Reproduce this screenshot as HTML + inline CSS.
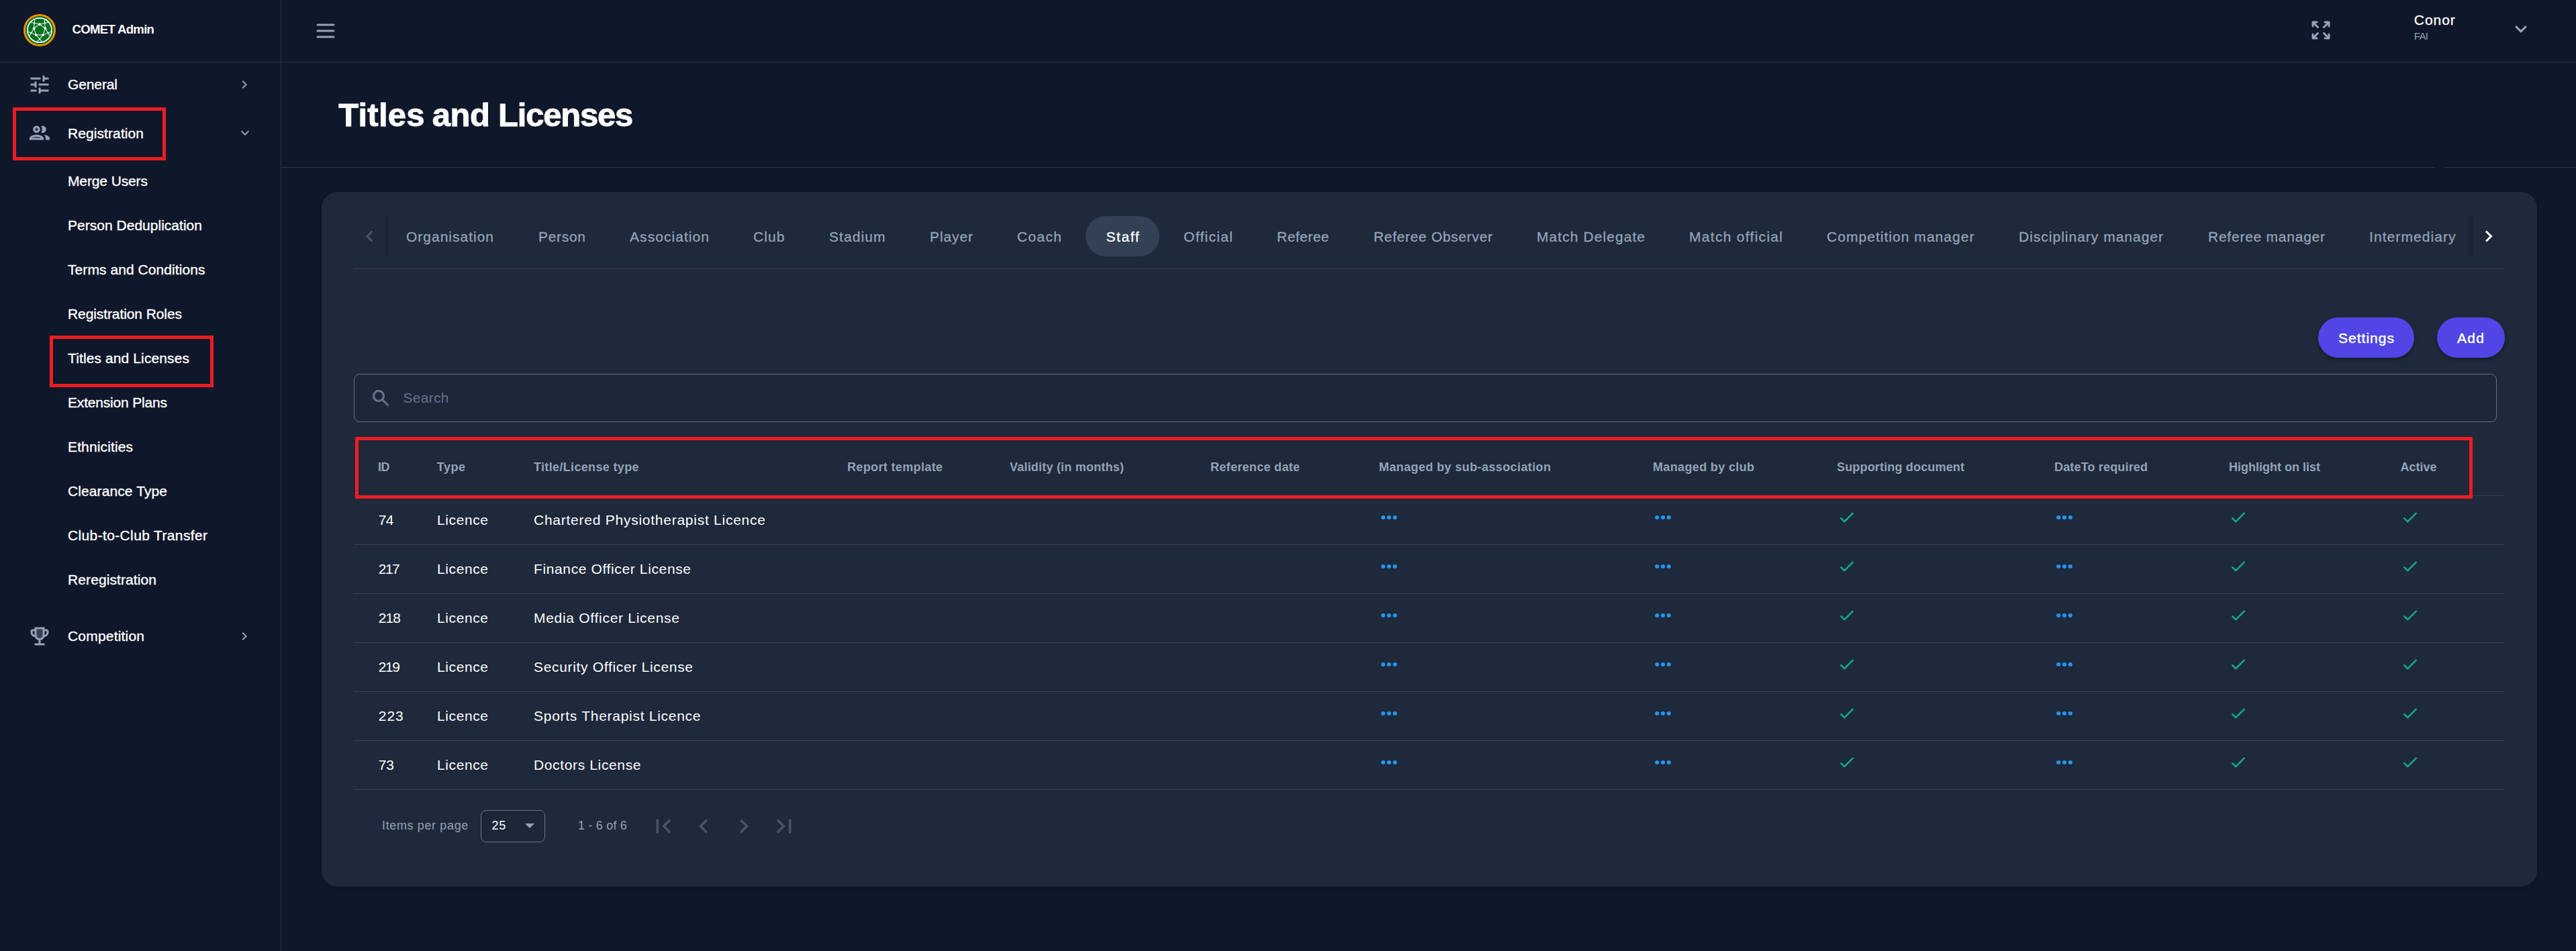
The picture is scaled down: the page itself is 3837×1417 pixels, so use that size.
<!DOCTYPE html>
<html lang="en"><head><meta charset="utf-8"><title>Titles and Licenses - COMET Admin</title>
<style>
html,body{margin:0;padding:0;background:#0f172a;}
body{width:3837px;height:1417px;position:relative;overflow:hidden;font-family:"Liberation Sans",sans-serif;}
.abs{position:absolute;display:block}
.t{position:absolute;white-space:pre;line-height:1;font-family:"Liberation Sans",sans-serif;}
</style></head><body>
<div class="abs" style="left:418px;top:0;width:1px;height:1417px;background:#2a3243"></div>
<div class="abs" style="left:0;top:92px;width:3837px;height:1px;background:#2a3243"></div>
<div class="abs" style="left:419px;top:249px;width:3208px;height:1px;background:#2a3243"></div>
<div class="abs" style="left:3640px;top:249px;width:197px;height:1px;background:#2a3243"></div>
<div class="abs" style="left:479px;top:286px;width:3300px;height:1035px;border-radius:24px;background:#1e293b;box-shadow:0 2px 4px rgba(0,0,0,.25)"></div>
<svg class="abs" style="left:35px;top:21px" width="48" height="48" viewBox="0 0 48 48"><circle cx="24" cy="24" r="24" fill="#f79400"/><circle cx="24" cy="24" r="21.2" fill="#0a7021"/><circle cx="24" cy="24" r="18.1" fill="none" stroke="#fff" stroke-width="1.7"/><line x1="24.00" y1="15.20" x2="32.37" y2="21.28" stroke="#fff" stroke-width="1.05" stroke-opacity=".92"/><line x1="32.37" y1="21.28" x2="29.17" y2="31.12" stroke="#fff" stroke-width="1.05" stroke-opacity=".92"/><line x1="29.17" y1="31.12" x2="18.83" y2="31.12" stroke="#fff" stroke-width="1.05" stroke-opacity=".92"/><line x1="18.83" y1="31.12" x2="15.63" y2="21.28" stroke="#fff" stroke-width="1.05" stroke-opacity=".92"/><line x1="15.63" y1="21.28" x2="24.00" y2="15.20" stroke="#fff" stroke-width="1.05" stroke-opacity=".92"/><line x1="29.17" y1="31.12" x2="20.18" y2="41.69" stroke="#fff" stroke-width="1.05" stroke-opacity=".92"/><line x1="18.83" y1="31.12" x2="27.82" y2="41.69" stroke="#fff" stroke-width="1.05" stroke-opacity=".92"/><line x1="18.83" y1="31.12" x2="5.99" y2="25.83" stroke="#fff" stroke-width="1.05" stroke-opacity=".92"/><line x1="15.63" y1="21.28" x2="8.35" y2="33.10" stroke="#fff" stroke-width="1.05" stroke-opacity=".92"/><line x1="15.63" y1="21.28" x2="16.69" y2="7.44" stroke="#fff" stroke-width="1.05" stroke-opacity=".92"/><line x1="24.00" y1="15.20" x2="10.51" y2="11.93" stroke="#fff" stroke-width="1.05" stroke-opacity=".92"/><line x1="24.00" y1="15.20" x2="37.49" y2="11.93" stroke="#fff" stroke-width="1.05" stroke-opacity=".92"/><line x1="32.37" y1="21.28" x2="31.31" y2="7.44" stroke="#fff" stroke-width="1.05" stroke-opacity=".92"/><line x1="32.37" y1="21.28" x2="39.65" y2="33.10" stroke="#fff" stroke-width="1.05" stroke-opacity=".92"/><line x1="29.17" y1="31.12" x2="42.01" y2="25.83" stroke="#fff" stroke-width="1.05" stroke-opacity=".92"/><circle cx="24.00" cy="15.20" r="1.900" fill="#fff"/><circle cx="32.37" cy="21.28" r="1.900" fill="#fff"/><circle cx="29.17" cy="31.12" r="1.900" fill="#fff"/><circle cx="18.83" cy="31.12" r="1.900" fill="#fff"/><circle cx="15.63" cy="21.28" r="1.900" fill="#fff"/><circle cx="24.00" cy="37.20" r="1.150" fill="#fff"/><circle cx="11.45" cy="28.08" r="1.150" fill="#fff"/><circle cx="16.24" cy="13.32" r="1.150" fill="#fff"/><circle cx="31.76" cy="13.32" r="1.150" fill="#fff"/><circle cx="36.55" cy="28.08" r="1.150" fill="#fff"/></svg>
<div class="t " style="left:107.50px;top:35.46px;font-size:18.6px;color:#fff;letter-spacing:-0.700px;font-weight:700;">COMET Admin</div>
<svg class="abs" style="left:466.5px;top:27.5px" width="36" height="36" viewBox="0 0 24 24" ><path d="M4 6h16M4 12h16M4 18h16" stroke="#94a3b8" stroke-width="2" stroke-linecap="round" fill="none"/></svg>
<svg class="abs" style="left:3438.5px;top:27px" width="36" height="36" viewBox="0 0 24 24" ><path d="M4 8V4m0 0h4M4 4l5 5m11-1V4m0 0h-4m4 0l-5 5M4 16v4m0 0h4m-4 0l5-5m11 5l-5-5m5 5v-4m0 4h-4" stroke="#94a3b8" stroke-width="2" stroke-linecap="round" stroke-linejoin="round" fill="none"/></svg>
<svg class="abs" style="left:3737px;top:25px" width="36" height="36" viewBox="0 0 24 24" ><path d="M16.59 8.59L12 13.17 7.41 8.59 6 10l6 6 6-6z" fill="#94a3b8"/></svg>
<div class="t " style="left:3595.80px;top:18.52px;font-size:21px;color:#fff;letter-spacing:0.950px;-webkit-text-stroke:0.35px #fff;">Conor</div>
<div class="t " style="left:3595.80px;top:45.80px;font-size:15px;color:#94a3b8;letter-spacing:-0.654px;">FAI</div>
<svg class="abs" style="left:41px;top:107.5px" width="36" height="36" viewBox="0 0 24 24" ><path d="M3 17v2h6v-2H3zM3 5v2h10V5H3zm10 16v-2h8v-2h-8v-2h-2v6h2zM7 9v2H3v2h4v2h2V9H7zm14 4v-2H11v2h10zm-6-4h2V7h4V5h-4V3h-2v6z" fill="#94a3b8"/></svg>
<svg class="abs" style="left:41px;top:179.5px" width="36" height="36" viewBox="0 0 24 24" ><circle cx="9" cy="8.5" opacity=".3" r="1.5" fill="#94a3b8"/><path d="M4.34 17h9.32c-.84-.58-2.87-1.25-4.66-1.25s-3.82.67-4.66 1.25z" opacity=".3" fill="#94a3b8"/><path fill="#94a3b8" d="M9 12c1.93 0 3.5-1.57 3.5-3.5S10.93 5 9 5 5.5 6.57 5.5 8.5 7.07 12 9 12zm0-5c.83 0 1.5.67 1.5 1.5S9.83 10 9 10s-1.5-.67-1.5-1.5S8.17 7 9 7zm0 6.750c-2.340 0-7 1.170-7 3.500V19h14v-1.750c0-2.330-4.660-3.500-7-3.500zM4.340 17c.84-.58 2.870-1.250 4.660-1.250s3.820.67 4.660 1.250H4.340zm11.700-3.190c1.160.84 1.960 1.960 1.960 3.440V19h4v-1.750c0-2.020-3.500-3.170-5.960-3.440zM15 12c1.930 0 3.500-1.570 3.500-3.500S16.930 5 15 5c-.54 0-1.040.13-1.500.35.630.89 1 1.980 1 3.150s-.37 2.260-1 3.150c.46.220.96.350 1.500.350z"/></svg>
<svg class="abs" style="left:41px;top:929.5px" width="36" height="36" viewBox="0 0 24 24" ><path d="M12 14c-1.650 0-3-1.350-3-3V5h6v6c0 1.650-1.350 3-3 3z" opacity=".3" fill="#94a3b8"/><path fill="#94a3b8" d="M19 5h-2V3H7v2H5c-1.100 0-2 .9-2 2v1c0 2.550 1.920 4.630 4.390 4.940.63 1.500 1.980 2.630 3.610 2.960V19H7v2h10v-2h-4v-3.100c1.630-.33 2.980-1.460 3.610-2.960C19.080 12.630 21 10.550 21 8V7c0-1.100-.9-2-2-2zM5 8V7h2v3.820C5.840 10.400 5 9.300 5 8zm7 6c-1.650 0-3-1.350-3-3V5h6v6c0 1.650-1.350 3-3 3zm7-6c0 1.300-.84 2.400-2 2.820V7h2v1z"/></svg>
<svg class="abs" style="left:352px;top:113.5px" width="24" height="24" viewBox="0 0 24 24" ><path d="M10 6L8.59 7.41 13.17 12l-4.58 4.59L10 18l6-6z" fill="#94a3b8"/></svg>
<svg class="abs" style="left:353px;top:185.5px" width="24" height="24" viewBox="0 0 24 24" ><path d="M16.59 8.59L12 13.17 7.41 8.59 6 10l6 6 6-6z" fill="#94a3b8"/></svg>
<svg class="abs" style="left:352px;top:936px" width="24" height="24" viewBox="0 0 24 24" ><path d="M10 6L8.59 7.41 13.17 12l-4.58 4.59L10 18l6-6z" fill="#94a3b8"/></svg>
<div class="t " style="left:101.00px;top:115.22px;font-size:21px;color:#fff;letter-spacing:-0.119px;-webkit-text-stroke:0.35px #fff;">General</div>
<div class="t " style="left:101.00px;top:187.72px;font-size:21px;color:#fff;letter-spacing:0.086px;-webkit-text-stroke:0.35px #fff;">Registration</div>
<div class="t " style="left:101.00px;top:259.22px;font-size:21px;color:#fff;letter-spacing:-0.120px;-webkit-text-stroke:0.35px #fff;">Merge Users</div>
<div class="t " style="left:101.00px;top:325.22px;font-size:21px;color:#fff;letter-spacing:0.019px;-webkit-text-stroke:0.35px #fff;">Person Deduplication</div>
<div class="t " style="left:101.00px;top:391.22px;font-size:21px;color:#fff;letter-spacing:0.073px;-webkit-text-stroke:0.35px #fff;">Terms and Conditions</div>
<div class="t " style="left:101.00px;top:457.22px;font-size:21px;color:#fff;letter-spacing:-0.093px;-webkit-text-stroke:0.35px #fff;">Registration Roles</div>
<div class="t " style="left:101.00px;top:523.22px;font-size:21px;color:#fff;letter-spacing:0.112px;-webkit-text-stroke:0.35px #fff;">Titles and Licenses</div>
<div class="t " style="left:101.00px;top:589.22px;font-size:21px;color:#fff;letter-spacing:-0.185px;-webkit-text-stroke:0.35px #fff;">Extension Plans</div>
<div class="t " style="left:101.00px;top:655.22px;font-size:21px;color:#fff;letter-spacing:0.129px;-webkit-text-stroke:0.35px #fff;">Ethnicities</div>
<div class="t " style="left:101.00px;top:721.22px;font-size:21px;color:#fff;letter-spacing:0.099px;-webkit-text-stroke:0.35px #fff;">Clearance Type</div>
<div class="t " style="left:101.00px;top:787.22px;font-size:21px;color:#fff;letter-spacing:0.363px;-webkit-text-stroke:0.35px #fff;">Club-to-Club Transfer</div>
<div class="t " style="left:101.00px;top:853.22px;font-size:21px;color:#fff;letter-spacing:0.098px;-webkit-text-stroke:0.35px #fff;">Reregistration</div>
<div class="t " style="left:101.00px;top:937.22px;font-size:21px;color:#fff;letter-spacing:0.194px;-webkit-text-stroke:0.35px #fff;">Competition</div>
<div class="t " style="left:504.25px;top:147.02px;font-size:49px;color:#fff;letter-spacing:0.230px;font-weight:700;-webkit-text-stroke:0.9px #fff;">Titles</div>
<div class="t " style="left:643.75px;top:147.02px;font-size:49px;color:#fff;letter-spacing:-0.433px;font-weight:700;-webkit-text-stroke:0.9px #fff;">and</div>
<div class="t " style="left:742.00px;top:147.02px;font-size:49px;color:#fff;letter-spacing:-1.206px;font-weight:700;-webkit-text-stroke:0.9px #fff;">Licenses</div>
<div class="abs" style="left:527px;top:400px;width:3203.5px;height:1px;background:#374152"></div>
<div class="abs" style="left:1617px;top:322px;width:110px;height:60px;border-radius:30px;background:#334155"></div>
<div class="t " style="left:605.00px;top:342.22px;font-size:21px;color:#94a3b8;letter-spacing:0.993px;-webkit-text-stroke:0.3px #94a3b8;">Organisation</div>
<div class="t " style="left:802.00px;top:342.22px;font-size:21px;color:#94a3b8;letter-spacing:0.692px;-webkit-text-stroke:0.3px #94a3b8;">Person</div>
<div class="t " style="left:938.00px;top:342.22px;font-size:21px;color:#94a3b8;letter-spacing:1.061px;-webkit-text-stroke:0.3px #94a3b8;">Association</div>
<div class="t " style="left:1122.00px;top:342.22px;font-size:21px;color:#94a3b8;letter-spacing:1.103px;-webkit-text-stroke:0.3px #94a3b8;">Club</div>
<div class="t " style="left:1235.00px;top:342.22px;font-size:21px;color:#94a3b8;letter-spacing:1.077px;-webkit-text-stroke:0.3px #94a3b8;">Stadium</div>
<div class="t " style="left:1385.00px;top:342.22px;font-size:21px;color:#94a3b8;letter-spacing:0.895px;-webkit-text-stroke:0.3px #94a3b8;">Player</div>
<div class="t " style="left:1515.00px;top:342.22px;font-size:21px;color:#94a3b8;letter-spacing:1.324px;-webkit-text-stroke:0.3px #94a3b8;">Coach</div>
<div class="t " style="left:1647.50px;top:342.22px;font-size:21px;color:#fff;letter-spacing:1.547px;-webkit-text-stroke:0.3px #fff;">Staff</div>
<div class="t " style="left:1763.00px;top:342.22px;font-size:21px;color:#94a3b8;letter-spacing:1.314px;-webkit-text-stroke:0.3px #94a3b8;">Official</div>
<div class="t " style="left:1902.00px;top:342.22px;font-size:21px;color:#94a3b8;letter-spacing:0.465px;-webkit-text-stroke:0.3px #94a3b8;">Referee</div>
<div class="t " style="left:2046.00px;top:342.22px;font-size:21px;color:#94a3b8;letter-spacing:0.673px;-webkit-text-stroke:0.3px #94a3b8;">Referee Observer</div>
<div class="t " style="left:2289.00px;top:342.22px;font-size:21px;color:#94a3b8;letter-spacing:1.070px;-webkit-text-stroke:0.3px #94a3b8;">Match Delegate</div>
<div class="t " style="left:2516.00px;top:342.22px;font-size:21px;color:#94a3b8;letter-spacing:1.295px;-webkit-text-stroke:0.3px #94a3b8;">Match official</div>
<div class="t " style="left:2721.00px;top:342.22px;font-size:21px;color:#94a3b8;letter-spacing:1.040px;-webkit-text-stroke:0.3px #94a3b8;">Competition manager</div>
<div class="t " style="left:3007.00px;top:342.22px;font-size:21px;color:#94a3b8;letter-spacing:0.996px;-webkit-text-stroke:0.3px #94a3b8;">Disciplinary manager</div>
<div class="t " style="left:3289.00px;top:342.22px;font-size:21px;color:#94a3b8;letter-spacing:0.755px;-webkit-text-stroke:0.3px #94a3b8;">Referee manager</div>
<div class="t " style="left:3529.00px;top:342.22px;font-size:21px;color:#94a3b8;letter-spacing:1.071px;-webkit-text-stroke:0.3px #94a3b8;">Intermediary</div>
<svg class="abs" style="left:540px;top:338px" width="22" height="28" viewBox="0 0 22 28"><path d="M14.5 6.5L7 14l7.500 7.500" stroke="#475569" stroke-width="3" fill="none"/></svg>
<svg class="abs" style="left:3696px;top:338px" width="22" height="28" viewBox="0 0 22 28"><path d="M7 6.5L14.500 14 7 21.500" stroke="#fff" stroke-width="3" fill="none"/></svg>
<div class="abs" style="left:574px;top:322px;width:10px;height:60px;background:linear-gradient(90deg,rgba(15,23,42,.3),rgba(15,23,42,0))"></div>
<div class="abs" style="left:3673px;top:322px;width:10px;height:60px;background:linear-gradient(270deg,rgba(15,23,42,.38),rgba(15,23,42,0))"></div>
<div class="abs" style="left:3452.5px;top:473px;width:143px;height:60px;border-radius:30px;background:#4f46e5;box-shadow:0 3px 6px rgba(0,0,0,.3)"></div>
<div class="abs" style="left:3629.5px;top:473px;width:101px;height:60px;border-radius:30px;background:#4f46e5;box-shadow:0 3px 6px rgba(0,0,0,.3)"></div>
<div class="t " style="left:3483.00px;top:493.47px;font-size:21px;color:#fff;letter-spacing:1.017px;-webkit-text-stroke:0.45px #fff;">Settings</div>
<div class="t " style="left:3660.00px;top:493.47px;font-size:21px;color:#fff;letter-spacing:1.317px;-webkit-text-stroke:0.45px #fff;">Add</div>
<div class="abs" style="left:526.5px;top:556.5px;width:3192.0px;height:72px;border-radius:9px;border:1px solid #64748b;background:#1c273a;box-sizing:border-box"></div>
<svg class="abs" style="left:552px;top:578px" width="30" height="30" viewBox="0 0 20 20" ><path fill-rule="evenodd" clip-rule="evenodd" d="M8 4a4 4 0 100 8 4 4 0 000-8zM2 8a6 6 0 1110.89 3.476l4.817 4.817a1 1 0 01-1.414 1.414l-4.816-4.816A6 6 0 012 8z" fill="#64748b"/></svg>
<div class="t " style="left:600.50px;top:582.22px;font-size:21px;color:#64748b;letter-spacing:0.292px;">Search</div>
<div class="t " style="left:563.00px;top:686.76px;font-size:18px;color:#94a3b8;letter-spacing:-0.500px;font-weight:700;">ID</div>
<div class="t " style="left:650.75px;top:686.76px;font-size:18px;color:#94a3b8;letter-spacing:0.524px;font-weight:700;">Type</div>
<div class="t " style="left:795.00px;top:686.76px;font-size:18px;color:#94a3b8;letter-spacing:0.340px;font-weight:700;">Title/License type</div>
<div class="t " style="left:1262.00px;top:686.76px;font-size:18px;color:#94a3b8;letter-spacing:0.355px;font-weight:700;">Report template</div>
<div class="t " style="left:1504.00px;top:686.76px;font-size:18px;color:#94a3b8;letter-spacing:0.210px;font-weight:700;">Validity (in months)</div>
<div class="t " style="left:1803.00px;top:686.76px;font-size:18px;color:#94a3b8;letter-spacing:0.303px;font-weight:700;">Reference date</div>
<div class="t " style="left:2054.00px;top:686.76px;font-size:18px;color:#94a3b8;letter-spacing:0.398px;font-weight:700;">Managed by sub-association</div>
<div class="t " style="left:2462.00px;top:686.76px;font-size:18px;color:#94a3b8;letter-spacing:0.355px;font-weight:700;">Managed by club</div>
<div class="t " style="left:2736.00px;top:686.76px;font-size:18px;color:#94a3b8;letter-spacing:0.168px;font-weight:700;">Supporting document</div>
<div class="t " style="left:3060.00px;top:686.76px;font-size:18px;color:#94a3b8;letter-spacing:0.165px;font-weight:700;">DateTo required</div>
<div class="t " style="left:3320.00px;top:686.76px;font-size:18px;color:#94a3b8;letter-spacing:0.001px;font-weight:700;">Highlight on list</div>
<div class="t " style="left:3575.50px;top:686.76px;font-size:18px;color:#94a3b8;letter-spacing:-0.006px;font-weight:700;">Active</div>
<div class="abs" style="left:527px;top:738px;width:3203.5px;height:1px;background:#374152"></div>
<div class="abs" style="left:527px;top:811px;width:3203.5px;height:1px;background:#374152"></div>
<div class="abs" style="left:527px;top:884px;width:3203.5px;height:1px;background:#374152"></div>
<div class="abs" style="left:527px;top:957px;width:3203.5px;height:1px;background:#374152"></div>
<div class="abs" style="left:527px;top:1030px;width:3203.5px;height:1px;background:#374152"></div>
<div class="abs" style="left:527px;top:1103px;width:3203.5px;height:1px;background:#374152"></div>
<div class="abs" style="left:527px;top:1176px;width:3203.5px;height:1px;background:#374152"></div>
<div class="t " style="left:563.75px;top:763.82px;font-size:21px;color:#fff;letter-spacing:-0.609px;">74</div>
<div class="t " style="left:651.00px;top:763.82px;font-size:21px;color:#fff;letter-spacing:0.603px;">Licence</div>
<div class="t " style="left:795.00px;top:763.82px;font-size:21px;color:#fff;letter-spacing:0.749px;">Chartered Physiotherapist Licence</div>
<svg class="abs" style="left:2054px;top:756px" width="30" height="30" viewBox="0 0 24 24" ><circle cx="5" cy="12" r="2.450" fill="#2196f3"/><circle cx="12" cy="12" r="2.450" fill="#2196f3"/><circle cx="19" cy="12" r="2.450" fill="#2196f3"/></svg>
<svg class="abs" style="left:2462px;top:756px" width="30" height="30" viewBox="0 0 24 24" ><circle cx="5" cy="12" r="2.450" fill="#2196f3"/><circle cx="12" cy="12" r="2.450" fill="#2196f3"/><circle cx="19" cy="12" r="2.450" fill="#2196f3"/></svg>
<svg class="abs" style="left:2736px;top:756px" width="30" height="30" viewBox="0 0 24 24" ><path d="M5 13l4 4L19 7" stroke="#13a38b" stroke-width="2" stroke-linecap="round" stroke-linejoin="round" fill="none"/></svg>
<svg class="abs" style="left:3060px;top:756px" width="30" height="30" viewBox="0 0 24 24" ><circle cx="5" cy="12" r="2.450" fill="#2196f3"/><circle cx="12" cy="12" r="2.450" fill="#2196f3"/><circle cx="19" cy="12" r="2.450" fill="#2196f3"/></svg>
<svg class="abs" style="left:3319px;top:756px" width="30" height="30" viewBox="0 0 24 24" ><path d="M5 13l4 4L19 7" stroke="#13a38b" stroke-width="2" stroke-linecap="round" stroke-linejoin="round" fill="none"/></svg>
<svg class="abs" style="left:3575px;top:756px" width="30" height="30" viewBox="0 0 24 24" ><path d="M5 13l4 4L19 7" stroke="#13a38b" stroke-width="2" stroke-linecap="round" stroke-linejoin="round" fill="none"/></svg>
<div class="t " style="left:563.75px;top:836.77px;font-size:21px;color:#fff;letter-spacing:-1.519px;">217</div>
<div class="t " style="left:651.00px;top:836.77px;font-size:21px;color:#fff;letter-spacing:0.603px;">Licence</div>
<div class="t " style="left:795.00px;top:836.77px;font-size:21px;color:#fff;letter-spacing:0.626px;">Finance Officer License</div>
<svg class="abs" style="left:2054px;top:829px" width="30" height="30" viewBox="0 0 24 24" ><circle cx="5" cy="12" r="2.450" fill="#2196f3"/><circle cx="12" cy="12" r="2.450" fill="#2196f3"/><circle cx="19" cy="12" r="2.450" fill="#2196f3"/></svg>
<svg class="abs" style="left:2462px;top:829px" width="30" height="30" viewBox="0 0 24 24" ><circle cx="5" cy="12" r="2.450" fill="#2196f3"/><circle cx="12" cy="12" r="2.450" fill="#2196f3"/><circle cx="19" cy="12" r="2.450" fill="#2196f3"/></svg>
<svg class="abs" style="left:2736px;top:829px" width="30" height="30" viewBox="0 0 24 24" ><path d="M5 13l4 4L19 7" stroke="#13a38b" stroke-width="2" stroke-linecap="round" stroke-linejoin="round" fill="none"/></svg>
<svg class="abs" style="left:3060px;top:829px" width="30" height="30" viewBox="0 0 24 24" ><circle cx="5" cy="12" r="2.450" fill="#2196f3"/><circle cx="12" cy="12" r="2.450" fill="#2196f3"/><circle cx="19" cy="12" r="2.450" fill="#2196f3"/></svg>
<svg class="abs" style="left:3319px;top:829px" width="30" height="30" viewBox="0 0 24 24" ><path d="M5 13l4 4L19 7" stroke="#13a38b" stroke-width="2" stroke-linecap="round" stroke-linejoin="round" fill="none"/></svg>
<svg class="abs" style="left:3575px;top:829px" width="30" height="30" viewBox="0 0 24 24" ><path d="M5 13l4 4L19 7" stroke="#13a38b" stroke-width="2" stroke-linecap="round" stroke-linejoin="round" fill="none"/></svg>
<div class="t " style="left:563.75px;top:909.72px;font-size:21px;color:#fff;letter-spacing:-0.894px;">218</div>
<div class="t " style="left:651.00px;top:909.72px;font-size:21px;color:#fff;letter-spacing:0.603px;">Licence</div>
<div class="t " style="left:795.00px;top:909.72px;font-size:21px;color:#fff;letter-spacing:0.714px;">Media Officer License</div>
<svg class="abs" style="left:2054px;top:902px" width="30" height="30" viewBox="0 0 24 24" ><circle cx="5" cy="12" r="2.450" fill="#2196f3"/><circle cx="12" cy="12" r="2.450" fill="#2196f3"/><circle cx="19" cy="12" r="2.450" fill="#2196f3"/></svg>
<svg class="abs" style="left:2462px;top:902px" width="30" height="30" viewBox="0 0 24 24" ><circle cx="5" cy="12" r="2.450" fill="#2196f3"/><circle cx="12" cy="12" r="2.450" fill="#2196f3"/><circle cx="19" cy="12" r="2.450" fill="#2196f3"/></svg>
<svg class="abs" style="left:2736px;top:902px" width="30" height="30" viewBox="0 0 24 24" ><path d="M5 13l4 4L19 7" stroke="#13a38b" stroke-width="2" stroke-linecap="round" stroke-linejoin="round" fill="none"/></svg>
<svg class="abs" style="left:3060px;top:902px" width="30" height="30" viewBox="0 0 24 24" ><circle cx="5" cy="12" r="2.450" fill="#2196f3"/><circle cx="12" cy="12" r="2.450" fill="#2196f3"/><circle cx="19" cy="12" r="2.450" fill="#2196f3"/></svg>
<svg class="abs" style="left:3319px;top:902px" width="30" height="30" viewBox="0 0 24 24" ><path d="M5 13l4 4L19 7" stroke="#13a38b" stroke-width="2" stroke-linecap="round" stroke-linejoin="round" fill="none"/></svg>
<svg class="abs" style="left:3575px;top:902px" width="30" height="30" viewBox="0 0 24 24" ><path d="M5 13l4 4L19 7" stroke="#13a38b" stroke-width="2" stroke-linecap="round" stroke-linejoin="round" fill="none"/></svg>
<div class="t " style="left:563.75px;top:982.67px;font-size:21px;color:#fff;letter-spacing:-1.394px;">219</div>
<div class="t " style="left:651.00px;top:982.67px;font-size:21px;color:#fff;letter-spacing:0.603px;">Licence</div>
<div class="t " style="left:795.00px;top:982.67px;font-size:21px;color:#fff;letter-spacing:0.679px;">Security Officer License</div>
<svg class="abs" style="left:2054px;top:975px" width="30" height="30" viewBox="0 0 24 24" ><circle cx="5" cy="12" r="2.450" fill="#2196f3"/><circle cx="12" cy="12" r="2.450" fill="#2196f3"/><circle cx="19" cy="12" r="2.450" fill="#2196f3"/></svg>
<svg class="abs" style="left:2462px;top:975px" width="30" height="30" viewBox="0 0 24 24" ><circle cx="5" cy="12" r="2.450" fill="#2196f3"/><circle cx="12" cy="12" r="2.450" fill="#2196f3"/><circle cx="19" cy="12" r="2.450" fill="#2196f3"/></svg>
<svg class="abs" style="left:2736px;top:975px" width="30" height="30" viewBox="0 0 24 24" ><path d="M5 13l4 4L19 7" stroke="#13a38b" stroke-width="2" stroke-linecap="round" stroke-linejoin="round" fill="none"/></svg>
<svg class="abs" style="left:3060px;top:975px" width="30" height="30" viewBox="0 0 24 24" ><circle cx="5" cy="12" r="2.450" fill="#2196f3"/><circle cx="12" cy="12" r="2.450" fill="#2196f3"/><circle cx="19" cy="12" r="2.450" fill="#2196f3"/></svg>
<svg class="abs" style="left:3319px;top:975px" width="30" height="30" viewBox="0 0 24 24" ><path d="M5 13l4 4L19 7" stroke="#13a38b" stroke-width="2" stroke-linecap="round" stroke-linejoin="round" fill="none"/></svg>
<svg class="abs" style="left:3575px;top:975px" width="30" height="30" viewBox="0 0 24 24" ><path d="M5 13l4 4L19 7" stroke="#13a38b" stroke-width="2" stroke-linecap="round" stroke-linejoin="round" fill="none"/></svg>
<div class="t " style="left:563.75px;top:1055.62px;font-size:21px;color:#fff;letter-spacing:0.981px;">223</div>
<div class="t " style="left:651.00px;top:1055.62px;font-size:21px;color:#fff;letter-spacing:0.603px;">Licence</div>
<div class="t " style="left:795.00px;top:1055.62px;font-size:21px;color:#fff;letter-spacing:0.721px;">Sports Therapist Licence</div>
<svg class="abs" style="left:2054px;top:1048px" width="30" height="30" viewBox="0 0 24 24" ><circle cx="5" cy="12" r="2.450" fill="#2196f3"/><circle cx="12" cy="12" r="2.450" fill="#2196f3"/><circle cx="19" cy="12" r="2.450" fill="#2196f3"/></svg>
<svg class="abs" style="left:2462px;top:1048px" width="30" height="30" viewBox="0 0 24 24" ><circle cx="5" cy="12" r="2.450" fill="#2196f3"/><circle cx="12" cy="12" r="2.450" fill="#2196f3"/><circle cx="19" cy="12" r="2.450" fill="#2196f3"/></svg>
<svg class="abs" style="left:2736px;top:1048px" width="30" height="30" viewBox="0 0 24 24" ><path d="M5 13l4 4L19 7" stroke="#13a38b" stroke-width="2" stroke-linecap="round" stroke-linejoin="round" fill="none"/></svg>
<svg class="abs" style="left:3060px;top:1048px" width="30" height="30" viewBox="0 0 24 24" ><circle cx="5" cy="12" r="2.450" fill="#2196f3"/><circle cx="12" cy="12" r="2.450" fill="#2196f3"/><circle cx="19" cy="12" r="2.450" fill="#2196f3"/></svg>
<svg class="abs" style="left:3319px;top:1048px" width="30" height="30" viewBox="0 0 24 24" ><path d="M5 13l4 4L19 7" stroke="#13a38b" stroke-width="2" stroke-linecap="round" stroke-linejoin="round" fill="none"/></svg>
<svg class="abs" style="left:3575px;top:1048px" width="30" height="30" viewBox="0 0 24 24" ><path d="M5 13l4 4L19 7" stroke="#13a38b" stroke-width="2" stroke-linecap="round" stroke-linejoin="round" fill="none"/></svg>
<div class="t " style="left:563.75px;top:1128.57px;font-size:21px;color:#fff;letter-spacing:-0.109px;">73</div>
<div class="t " style="left:651.00px;top:1128.57px;font-size:21px;color:#fff;letter-spacing:0.603px;">Licence</div>
<div class="t " style="left:795.00px;top:1128.57px;font-size:21px;color:#fff;letter-spacing:0.638px;">Doctors License</div>
<svg class="abs" style="left:2054px;top:1121px" width="30" height="30" viewBox="0 0 24 24" ><circle cx="5" cy="12" r="2.450" fill="#2196f3"/><circle cx="12" cy="12" r="2.450" fill="#2196f3"/><circle cx="19" cy="12" r="2.450" fill="#2196f3"/></svg>
<svg class="abs" style="left:2462px;top:1121px" width="30" height="30" viewBox="0 0 24 24" ><circle cx="5" cy="12" r="2.450" fill="#2196f3"/><circle cx="12" cy="12" r="2.450" fill="#2196f3"/><circle cx="19" cy="12" r="2.450" fill="#2196f3"/></svg>
<svg class="abs" style="left:2736px;top:1121px" width="30" height="30" viewBox="0 0 24 24" ><path d="M5 13l4 4L19 7" stroke="#13a38b" stroke-width="2" stroke-linecap="round" stroke-linejoin="round" fill="none"/></svg>
<svg class="abs" style="left:3060px;top:1121px" width="30" height="30" viewBox="0 0 24 24" ><circle cx="5" cy="12" r="2.450" fill="#2196f3"/><circle cx="12" cy="12" r="2.450" fill="#2196f3"/><circle cx="19" cy="12" r="2.450" fill="#2196f3"/></svg>
<svg class="abs" style="left:3319px;top:1121px" width="30" height="30" viewBox="0 0 24 24" ><path d="M5 13l4 4L19 7" stroke="#13a38b" stroke-width="2" stroke-linecap="round" stroke-linejoin="round" fill="none"/></svg>
<svg class="abs" style="left:3575px;top:1121px" width="30" height="30" viewBox="0 0 24 24" ><path d="M5 13l4 4L19 7" stroke="#13a38b" stroke-width="2" stroke-linecap="round" stroke-linejoin="round" fill="none"/></svg>
<div class="t " style="left:569.00px;top:1221.46px;font-size:18px;color:#94a3b8;letter-spacing:0.633px;">Items per page</div>
<div class="abs" style="left:716px;top:1207px;width:96px;height:48px;border-radius:8px;border:1px solid #64748b;background:#1c273a;box-sizing:border-box"></div>
<div class="t " style="left:732.50px;top:1221.46px;font-size:18px;color:#fff;letter-spacing:0.778px;">25</div>
<svg class="abs" style="left:782px;top:1227px" width="14" height="7" viewBox="0 0 14 7"><path d="M0 0h14L7 7z" fill="#94a3b8"/></svg>
<div class="t " style="left:861.00px;top:1221.46px;font-size:18px;color:#94a3b8;letter-spacing:0.195px;">1 - 6 of 6</div>
<svg class="abs" style="left:966.5px;top:1210px" width="42" height="42" viewBox="0 0 24 24" ><path d="M18.41 16.59L13.82 12l4.59-4.59L17 6l-6 6 6 6zM6 6h2v12H6z" fill="#475569"/></svg>
<svg class="abs" style="left:1026.5px;top:1210px" width="42" height="42" viewBox="0 0 24 24" ><path d="M15.41 7.41L14 6l-6 6 6 6 1.41-1.41L10.83 12z" fill="#475569"/></svg>
<svg class="abs" style="left:1086.5px;top:1210px" width="42" height="42" viewBox="0 0 24 24" ><path d="M10 6L8.59 7.41 13.17 12l-4.58 4.59L10 18l6-6z" fill="#475569"/></svg>
<svg class="abs" style="left:1146.5px;top:1210px" width="42" height="42" viewBox="0 0 24 24" ><path d="M5.59 7.41L10.18 12l-4.59 4.59L7 18l6-6-6-6zM16 6h2v12h-2z" fill="#475569"/></svg>
<div class="abs" style="left:19px;top:160px;width:228px;height:78.5px;border:5px solid #ed1c24;box-sizing:border-box"></div>
<div class="abs" style="left:74px;top:500px;width:243.5px;height:76.75px;border:5px solid #ed1c24;box-sizing:border-box"></div>
<div class="abs" style="left:528.5px;top:651px;width:3154.5px;height:91.5px;border:5px solid #ed1c24;box-sizing:border-box"></div>
</body></html>
